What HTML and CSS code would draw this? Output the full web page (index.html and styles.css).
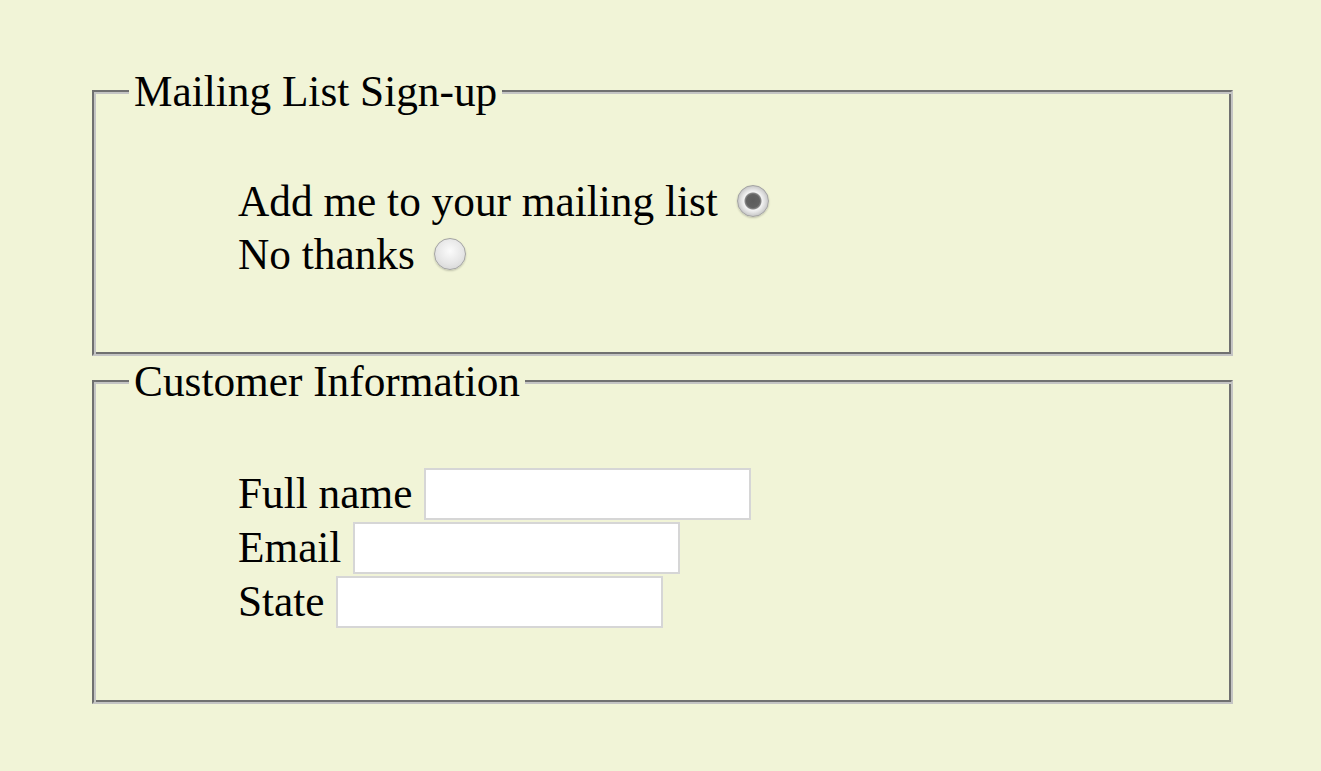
FILE: index.html
```html
<!DOCTYPE html>
<html lang="en">
<head>
<meta charset="utf-8">
<title>Sign-up</title>
<link rel="stylesheet" href="styles.css">
</head>
<body>
<form class="page">
  <fieldset class="group">
    <legend class="group-title">Mailing List Sign-up</legend>
    <div class="rows rows-radio">
      <label class="row">Add me to your mailing list <input class="radio" type="radio" name="list" checked></label>
      <label class="row">No thanks <input class="radio" type="radio" name="list"></label>
    </div>
  </fieldset>
  <fieldset class="group">
    <legend class="group-title">Customer Information</legend>
    <div class="rows rows-text">
      <label class="row">Full name <input class="field" type="text"></label>
      <label class="row">Email <input class="field" type="text"></label>
      <label class="row">State <input class="field" type="text"></label>
    </div>
  </fieldset>
</form>
</body>
</html>
```
FILE: styles.css
```css
html, body {
  margin: 0;
  padding: 0;
  background: #f1f4d7;
}

body {
  font-family: "Liberation Serif", "Times New Roman", serif;
  font-size: 43.3px;
  color: #000;
}

.page {
  padding: 66px 88px 0 92px;
}

.group {
  margin: 0;
  padding: 0 35px 74px 35px;
  border: 2px solid;
  border-color: #707070 #c4c4c4 #c4c4c4 #707070;
  box-shadow: inset 2px 2px 0 #c4c4c4, inset -2px -2px 0 #707070;
  min-width: 0;
}

.group-title {
  padding: 0 5px;
  font-size: 43.3px;
  line-height: normal;
  background: #f1f4d7;
  position: relative;
}

.rows {
  padding: 58px 0 0 109px;
  display: flex;
  flex-direction: column;
}

.rows-text {
  padding-top: 60px;
}

.row {
  display: flex;
  align-items: center;
  white-space: pre;
}

.rows-radio .row {
  height: 53px;
}

.rows-text .row {
  height: 54px;
}

.radio {
  appearance: none;
  -webkit-appearance: none;
  margin: 0 0 0 8px;
  width: 32px;
  height: 32px;
  border-radius: 50%;
  border: 1px solid #a3a3a3;
  box-sizing: border-box;
  background: radial-gradient(circle at 50% 40%, #fbfbfb 0, #e6e6e6 55%, #cfcfcf 100%);
  box-shadow: 0 1px 2px rgba(0, 0, 0, 0.2);
}

.radio:checked {
  background: radial-gradient(circle at 50% 50%, #5c5c5c 0, #626262 6.5px, #888 8px, #f4f4f4 9px, #e0e0e0 12px, #c8c8c8 15px);
}

.field {
  margin: 1px 0 0 1px;
  width: 327px;
  height: 52px;
  box-sizing: border-box;
  border: 2px solid #d6d6d6;
  background: #fff;
  font: inherit;
  padding: 0 4px;
}
```
